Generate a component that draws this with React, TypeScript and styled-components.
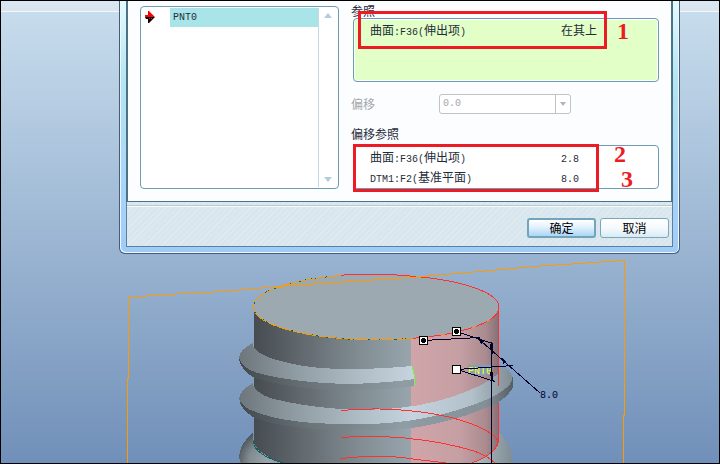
import React from "react";
import styled, { createGlobalStyle } from "styled-components";

const GlobalStyle = createGlobalStyle`
  *, *::before, *::after { box-sizing: border-box; }
  body {
    margin: 0;
    color: #1f2d3a;
    font: 12px/20px "Noto Sans CJK SC", sans-serif;
  }
`;

const Workspace = styled.main`
  display: flex;
  flex-direction: column;
  min-height: 100vh;
  overflow: hidden;
  border: 1px solid #000;
  background:
    linear-gradient(#dae6f1, #d9e4ef) top / 100% 10px no-repeat,
    linear-gradient(#f4f8fc, #f4f8fc) 0 10px / 100% 1px no-repeat,
    linear-gradient(#c9deee, #7190b9);
`;

const Dialog = styled.section`
  margin: 0 39px 0 118px;
  padding: 0 6px 6px;
  border: 1px solid #485c76;
  border-top: 0;
  border-radius: 0 0 6px 6px;
  background: linear-gradient(#e4fbff, #b4e6f2 30%, #a8d4fa 75%, #9fcbf8);
  box-shadow: inset 1px -1px #eef7ff, inset -1px 0 #eef7ff;
`;

const Content = styled.div`
  display: grid;
  grid-template-columns: 199px 1fr;
  column-gap: 12px;
  padding: 3px 12px 12px;
  border: solid #4f7184;
  border-width: 0 2px 1px;
  background: #fcfdff;
`;

const PointList = styled.div`
  display: flex;
  margin-top: 2px;
  padding: 1px;
  border: 1px solid #6c9bb3;
  border-radius: 4px;
  background: #fff;
`;

const Gutter = styled.div`
  width: 28px;
  padding: 3px 0 0 3px;
  line-height: 0;
`;

const Options = styled.ul`
  flex: 1;
  margin: 0;
  padding: 0;
  list-style: none;
`;

const Option = styled.button`
  display: block;
  width: 100%;
  height: 19px;
  padding: 0 3px;
  border: 0;
  background: #a9e5e8;
  color: #1f2d3a;
  font: 10px/19px "Liberation Mono", monospace;
  text-align: left;
`;

const ScrollTrack = styled.div`
  display: flex;
  flex-direction: column;
  justify-content: space-between;
  align-items: center;
  width: 19px;
  padding: 5px 0;
  border-left: 1px solid #c3d9e6;
`;

const Settings = styled.div`
  display: flex;
  flex-direction: column;
`;

const Heading = styled.h2<{ $spaced?: boolean }>`
  margin: 0 0 ${(p) => (p.$spaced ? 4 : 0)}px;
  font-size: 12px;
  font-weight: 400;
  line-height: 14px;
`;

const Collector = styled.div<{ $active?: boolean }>`
  position: relative;
  height: ${(p) => (p.$active ? 64 : 44)}px;
  margin-left: 2px;
  padding: 1px;
  border: 1px solid #6c9bb3;
  border-radius: 4px;
  background: ${(p) => (p.$active ? "#e3ffc8" : "#fff")};
  box-shadow: inset 0 0 0 1px #fff;
`;

const References = styled.table`
  width: 100%;
  table-layout: fixed;
  border-collapse: collapse;

  td {
    height: 20px;
    padding: 0;
    white-space: nowrap;
    line-height: 20px;
  }
  td:first-child {
    width: 206px;
    padding-left: 15px;
  }
`;

const Latin = styled.span`
  font: 10px "Liberation Mono", monospace;
`;

const Highlight = styled.div<{ $left: number; $top: number; $width: number; $height: number }>`
  position: absolute;
  left: ${(p) => p.$left}px;
  top: ${(p) => p.$top}px;
  width: ${(p) => p.$width}px;
  height: ${(p) => p.$height}px;
  border: 3px solid #ed1c24;
  pointer-events: none;
`;

const Callout = styled.span<{ $left: number; $top: number }>`
  position: absolute;
  left: ${(p) => p.$left}px;
  top: ${(p) => p.$top}px;
  color: #ed1c24;
  font: bold 24px/24px "Liberation Serif", serif;
`;

const OffsetField = styled.div`
  display: flex;
  align-items: center;
  height: 20px;
  margin: 12px 0 13px;
  color: #a4a8ab;
`;

const OffsetLabel = styled.label`
  width: 88px;
`;

const Combo = styled.div`
  display: flex;
  position: relative;
  width: 132px;
  height: 20px;

  svg {
    position: absolute;
    right: 5px;
    top: 8px;
  }
`;

const ComboSelect = styled.select`
  width: 100%;
  appearance: none;
  padding: 0 3px;
  border: 1px solid #bfc4c8;
  border-radius: 3px;
  background: linear-gradient(#bfc4c8, #bfc4c8) right 14px top / 1px 100% no-repeat #fff;
  color: #a4a8ab;
  font: 10px/18px "Liberation Mono", monospace;
  opacity: 1;
`;

const Footer = styled.footer`
  display: flex;
  justify-content: flex-end;
  gap: 4px;
  padding: 16px 3px 8px;
  border: 1px solid #60809a;
  border-top: 0;
  background:
    linear-gradient(#b9cad4, #b9cad4) 0 3px / 100% 1px no-repeat,
    linear-gradient(#f7fbfd, #f7fbfd) 0 4px / 100% 1px no-repeat,
    repeating-linear-gradient(135deg, #d8e6ee 0 3px, #dfebf1 3px 4px);
`;

const DialogButton = styled.button<{ $primary?: boolean }>`
  width: 69px;
  height: 20px;
  padding: 0;
  border: ${(p) => (p.$primary ? "2px solid #74a3bb" : "1px solid #7ba6bb")};
  border-radius: 3px;
  background: ${(p) =>
    p.$primary
      ? "linear-gradient(#fff, #e2f1fb 45%, #a9d7f6)"
      : "linear-gradient(#fff, #f5fafd 50%, #d8ebf6)"};
  color: #000;
  font: 12px/16px "Noto Sans CJK SC", sans-serif;
`;

const Viewport = styled.svg`
  display: block;
  width: 100%;
  height: auto;
  font-family: "Liberation Mono", monospace;
`;

function ScrollArrow({ down }: { down?: boolean }) {
  return (
    <svg width="8" height="5" viewBox="0 0 8 5" aria-hidden="true">
      <path d={down ? "M0 0h8L4 5z" : "M0 5h8L4 0z"} fill="#b4ccda" />
    </svg>
  );
}

function Handle({ x, y, hollow }: { x: number; y: number; hollow?: boolean }) {
  return (
    <g>
      <rect x={x - 4} y={y - 4} width="8" height="8" fill="#fff" stroke="#000" />
      {!hollow && <circle cx={x} cy={y} r="2.5" fill="#000" />}
    </g>
  );
}

function Model() {
  return (
    <Viewport viewBox="1 254 718 209" shapeRendering="crispEdges" role="img" aria-label="PNT0">
      <defs>
        <linearGradient id="body" gradientUnits="userSpaceOnUse" x1="253" x2="499" y1="0" y2="0">
          <stop offset="0" stopColor="#454b4f" />
          <stop offset="0.2" stopColor="#62696f" />
          <stop offset="0.42" stopColor="#7f8b90" />
          <stop offset="0.64" stopColor="#98a5ad" />
          <stop offset="1" stopColor="#7c888e" />
        </linearGradient>
        <linearGradient id="pink" gradientUnits="userSpaceOnUse" x1="411" x2="499" y1="0" y2="0">
          <stop offset="0" stopColor="#d0a5aa" />
          <stop offset="0.55" stopColor="#c59fa3" />
          <stop offset="0.85" stopColor="#a98b8f" />
          <stop offset="1" stopColor="#876f73" />
        </linearGradient>
        <linearGradient id="rib" gradientUnits="userSpaceOnUse" x1="239" x2="513" y1="0" y2="0">
          <stop offset="0" stopColor="#6c767b" />
          <stop offset="0.2" stopColor="#8f9ba2" />
          <stop offset="0.45" stopColor="#b0bec7" />
          <stop offset="0.63" stopColor="#c4d3dd" />
          <stop offset="0.85" stopColor="#b1c0c9" />
          <stop offset="1" stopColor="#7f8c94" />
        </linearGradient>
        <linearGradient id="under" gradientUnits="userSpaceOnUse" x1="239" x2="513" y1="0" y2="0">
          <stop offset="0" stopColor="#42494d" />
          <stop offset="0.25" stopColor="#697277" />
          <stop offset="0.6" stopColor="#909da5" />
          <stop offset="0.9" stopColor="#849097" />
          <stop offset="1" stopColor="#555f64" />
        </linearGradient>
        <radialGradient id="bulb" gradientUnits="userSpaceOnUse" cx="268" cy="462" r="32">
          <stop offset="0" stopColor="#9ba8af" />
          <stop offset="0.6" stopColor="#818c92" />
          <stop offset="1" stopColor="#4d5559" />
        </radialGradient>
      </defs>

      <path d="M253 433Q239 444 239 458L241 463H284L253 440z" fill="url(#bulb)" />
      <path d="M499 433Q510 443 512 455V463H470z" fill="url(#rib)" />
      <path d="M253.500 306.500V442Q258 455 284 463H472Q499 453 499 440V306.500z" fill="url(#body)" />
      <path d="M411.500 330L499 306V440Q498 453 472 463H411z" fill="url(#pink)" />

      <path d="M239 359Q241 370 253 377Q285 389 345 390Q390 390 414 386V379L350 376z" fill="url(#under)" />
      <path d="M253 343Q239 350 239 358Q243 369 258 373Q296 383 350 384Q386 383 415 379L412 366Q380 369 350 369Q310 369 285 362Q258 356 253 346z" fill="url(#rib)" />
      <path d="M412 366Q415 375 415 386" fill="none" stroke="#79f04b" />

      <path d="M239 398Q240 409 253 417Q280 429 345 430Q390 431 412 428Q455 421 480 410Q506 402 513 387V377L480 400L400 420L253 409z" fill="url(#under)" />
      <path d="M253 383Q239 391 239 399Q242 408 256 412Q282 422 325 423.500H380Q412 422 447 413Q487 402 502 391Q514 383 512 376Q510 369 499 365V372Q493 380 470 390Q438 404 398 408Q365 411 340 409Q300 406 270 398Q257 393 253 385z" fill="url(#rib)" />

      <ellipse cx="376.500" cy="306.800" rx="123" ry="32.500" fill="#9da9b1" />
      <g fill="none">
        <path d="M341 275.500A123 32.500 0 0 0 253.500 307A123 32.500 0 0 0 411 338.500" stroke="#00686b" />
        <path d="M341 275.500A123 32.500 0 0 0 253.500 307A123 32.500 0 0 0 411 338.500" stroke="#ff9900" strokeDasharray="14 2 9 1" />
        <path d="M341 275.200Q376 272.500 410 276A123 32.500 0 0 1 499 307A123 32.500 0 0 1 411 338.500" stroke="#ff3030" />
        <path d="M499 307A123 32.500 0 0 1 411 338.500" stroke="#ff8c20" strokeDasharray="4 12" />
        <path d="M498.500 307V386M498.500 403V440Q498 453 472 463" stroke="#ff3030" />
        <path d="M341 410.500Q370 408 393 409.500Q440 412 472 424Q497 434 498.500 443M341 437.500Q370 435 405 438Q445 442 474 451Q488 456 495 463M340 458.500Q382 454 413 459L446 463" stroke="#ff3030" />
        <path d="M253.500 441Q253 454 283 463" stroke="#006668" />
        <path d="M127.500 463V379L128.500 378V297.500L158 295L223 291.500L277 286.500L410 277.500L457 273.500L540 266L624.500 260.500V415L623.500 416V463" stroke="#ff9900" />
      </g>

      <rect x="468" y="365" width="23" height="10" fill="#829dbd" />
      <text x="468" y="374" fontSize="10" fill="#ffff18">PNT0</text>
      <g fill="none" stroke="#00002f">
        <path d="M423 340.500L480 337.500M456 331.500L493 343.500M491.500 343V463M457 369.500L513 365.500M457 369.500L495 381.500M477 337.500L540 393" />
      </g>
      <g fill="#00002f">
        <path d="M478 337L484 341L481 344zM502 358L507 362L503 364zM490 344H493V354H491zM490 372H493V380H491z" />
      </g>
      <Handle x={423.5} y={340.5} />
      <Handle x={456.5} y={331.5} />
      <Handle x={456.5} y={369.5} hollow />
      <text x="540" y="398" fontSize="10" fill="#00002f">8.0</text>
    </Viewport>
  );
}

export default function App() {
  return (
    <>
      <GlobalStyle />
      <Workspace>
        <Dialog role="dialog">
          <Content>
            <PointList>
              <Gutter>
                <svg width="10" height="12" viewBox="0 0 10 12" aria-hidden="true">
                  <path d="M0 4h3V0h1l6 6H0z" fill="#f00" />
                  <path d="M0 6h10L4 12H3V8H1z" fill="#000" />
                  <path d="M4 7.500h1M6 7.500h1" stroke="#f00" />
                </svg>
              </Gutter>
              <Options>
                <li><Option type="button">PNT0</Option></li>
              </Options>
              <ScrollTrack>
                <ScrollArrow />
                <ScrollArrow down />
              </ScrollTrack>
            </PointList>
            <Settings>
              <Heading>参照</Heading>
              <Collector $active>
                <References>
                  <tbody>
                    <tr>
                      <td>曲面<Latin>:F36(</Latin>伸出项<Latin>)</Latin></td>
                      <td>在其上</td>
                    </tr>
                  </tbody>
                </References>
                <Highlight $left={4} $top={-8} $width={249} $height={38} />
                <Callout $left={263} $top={0}>1</Callout>
              </Collector>
              <OffsetField>
                <OffsetLabel htmlFor="offset">偏移</OffsetLabel>
                <Combo>
                  <ComboSelect id="offset" disabled defaultValue="0.0">
                    <option>0.0</option>
                  </ComboSelect>
                  <svg width="6" height="4" viewBox="0 0 6 4" aria-hidden="true">
                    <path d="M0 0h6L3 4z" fill="#aeb4b8" />
                  </svg>
                </Combo>
              </OffsetField>
              <Heading $spaced>偏移参照</Heading>
              <Collector>
                <References>
                  <tbody>
                    <tr>
                      <td>曲面<Latin>:F36(</Latin>伸出项<Latin>)</Latin></td>
                      <td><Latin>2.8</Latin></td>
                    </tr>
                    <tr>
                      <td><Latin>DTM1:F2(</Latin>基准平面<Latin>)</Latin></td>
                      <td><Latin>8.0</Latin></td>
                    </tr>
                  </tbody>
                </References>
                <Highlight $left={-1} $top={-2} $width={246} $height={48} />
                <Callout $left={260} $top={-4}>2</Callout>
                <Callout $left={267} $top={21}>3</Callout>
              </Collector>
            </Settings>
          </Content>
          <Footer>
            <DialogButton type="button" $primary>确定</DialogButton>
            <DialogButton type="button">取消</DialogButton>
          </Footer>
        </Dialog>
        <Model />
      </Workspace>
    </>
  );
}
